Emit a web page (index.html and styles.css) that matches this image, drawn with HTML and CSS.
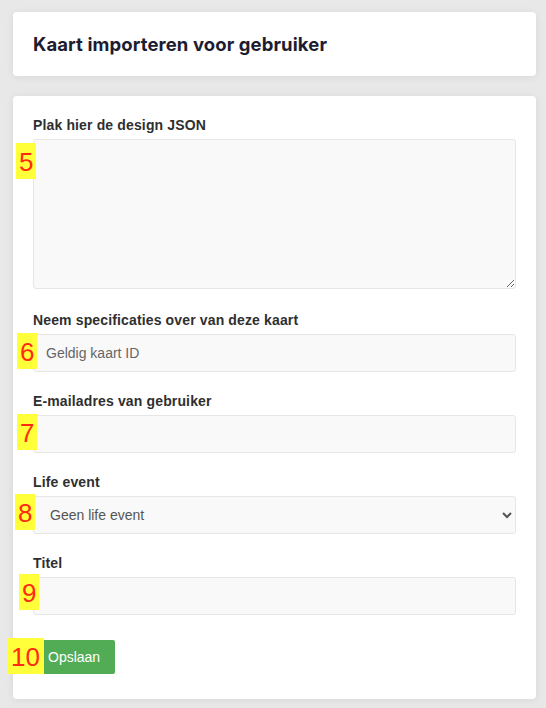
FILE: index.html
```html
<!DOCTYPE html>
<html lang="nl">
<head>
<meta charset="utf-8">
<title>Kaart importeren voor gebruiker</title>
<link rel="stylesheet" href="styles.css">
</head>
<body>
<div class="page">
  <div class="card header-card">
    <h1 class="title">Kaart importeren voor gebruiker</h1>
  </div>
  <form class="card form-card">
    <div class="group">
      <label class="label" for="json">Plak hier de design JSON</label>
      <textarea id="json" class="control textarea"></textarea>
    </div>
    <div class="group">
      <label class="label" for="kaart">Neem specificaties over van deze kaart</label>
      <input id="kaart" class="control" type="text" placeholder="Geldig kaart ID">
    </div>
    <div class="group">
      <label class="label" for="email">E-mailadres van gebruiker</label>
      <input id="email" class="control" type="text">
    </div>
    <div class="group">
      <label class="label" for="life">Life event</label>
      <select id="life" class="control select">
        <option>Geen life event</option>
      </select>
    </div>
    <div class="group">
      <label class="label" for="titel">Titel</label>
      <input id="titel" class="control" type="text">
    </div>
    <button class="btn" type="button">Opslaan</button>
  </form>

  <span class="badge b5">5</span>
  <span class="badge b6">6</span>
  <span class="badge b7">7</span>
  <span class="badge b8">8</span>
  <span class="badge b9">9</span>
  <span class="badge b10">10</span>
</div>
</body>
</html>
```
FILE: styles.css
```css
html, body {
  margin: 0;
  padding: 0;
}
body {
  background: #e8e8e8;
  font-family: "Liberation Sans", Arial, sans-serif;
  color: #333;
}
.page {
  position: relative;
  padding: 12px 10px 10px 13px;
  display: flex;
  flex-direction: column;
  gap: 20px;
}
.card {
  background: #fff;
  border-radius: 4px;
  box-shadow: 0 1px 8px rgba(0, 0, 0, 0.07);
}
.header-card {
  padding: 20px;
  height: 24px;
}
.title {
  margin: 0;
  font-family: Inter, "Noto Sans", sans-serif;
  font-weight: 700;
  font-size: 18.5px;
  line-height: 24px;
  color: #1d1c30;
  letter-spacing: 0.1px;
}
.form-card {
  margin: 0;
  padding: 20px 20px 25px;
  display: flex;
  flex-direction: column;
  align-items: flex-start;
}
.group {
  width: 100%;
  margin-bottom: 20px;
  display: flex;
  flex-direction: column;
}
.group:first-child {
  margin-bottom: 22px;
}
.group:last-of-type {
  margin-bottom: 25px;
}
.label {
  font-weight: bold;
  font-size: 14px;
  line-height: 18px;
  letter-spacing: 0.14px;
  margin-bottom: 5px;
  color: #2f2f2f;
}
.control {
  box-sizing: border-box;
  width: 100%;
  height: 38px;
  margin: 0;
  padding: 0 12px;
  background: #f9f9f9;
  border: 1px solid #e6e6e6;
  border-radius: 3px;
  font-family: "Liberation Sans", Arial, sans-serif;
  font-size: 14px;
  color: #555;
  outline: none;
}
.control::placeholder {
  color: #666;
}
.textarea {
  display: block;
  height: 150px;
  padding: 8px 12px;
  resize: vertical;
}
.select {
  color: #555;
}
.btn {
  height: 34px;
  padding: 0 15px;
  background: #52ac56;
  color: #fff;
  border: none;
  border-radius: 2px;
  font-family: "Liberation Sans", Arial, sans-serif;
  font-size: 14px;
  line-height: 34px;
}
.badge {
  position: absolute;
  height: 36px;
  padding: 0 3px;
  background: #ffff3a;
  color: #ff2a12;
  font-family: "Liberation Sans", Arial, sans-serif;
  font-size: 26px;
  line-height: 38px;
}
.b5 { left: 16px; top: 143px; }
.b6 { left: 17px; top: 333px; }
.b7 { left: 17px; top: 414px; }
.b8 { left: 15px; top: 494px; }
.b9 { left: 19px; top: 574px; }
.b10 { left: 7px; top: 638px; padding: 0 4px; }
```
